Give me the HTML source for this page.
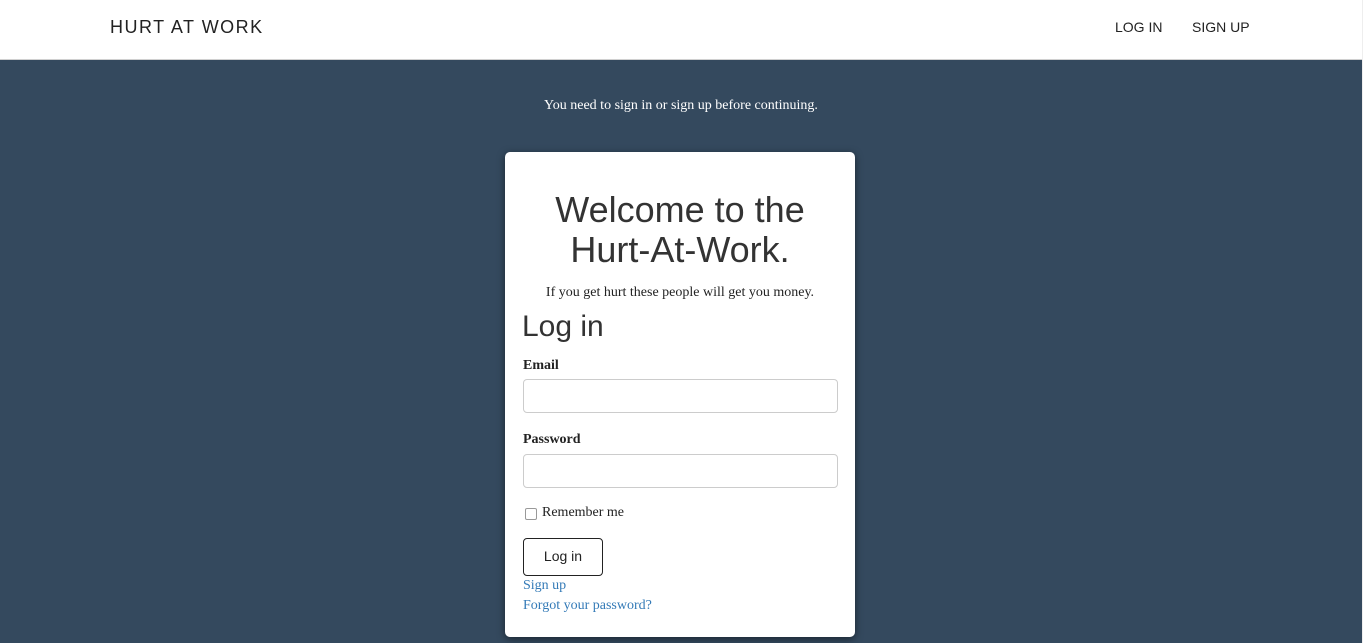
<!DOCTYPE html>
<html><head><style>
body{margin:0;width:1363px;height:643px;background:#34495e;overflow:hidden;font-family:"Liberation Serif",serif;position:relative}
.nav{position:absolute;left:0;top:0;width:1362px;height:59px;background:#fff;border-bottom:1px solid #d0d0d0}
.brand{position:absolute;left:110px;top:17px;font:18px "Liberation Sans",sans-serif;letter-spacing:1.5px;color:#222}
.nl{position:absolute;top:19px;font:14px "Liberation Sans",sans-serif;color:#222}
.strip{position:absolute;right:0;top:0;width:1px;height:643px;background:#eee}
.flash{position:absolute;top:98px;left:0;width:1362px;text-align:center;color:#fff;font-size:14px}
.card{position:absolute;left:505px;top:152px;width:350px;height:485px;background:#fff;border-radius:5px;box-shadow:0 2px 8px rgba(0,0,0,.5)}
h1{position:absolute;left:0;width:350px;top:38px;margin:0;text-align:center;font:36px/40px "Liberation Sans",sans-serif;color:#333;font-weight:300}
.sub{position:absolute;top:133px;width:350px;text-align:center;font-size:14px;color:#222}
h2{position:absolute;left:17px;top:158px;margin:0;font:30px "Liberation Sans",sans-serif;color:#333;font-weight:normal}
.lbl{position:absolute;left:18px;font-weight:bold;font-size:14px;color:#222}
.inp{position:absolute;left:18px;width:313px;height:32px;border:1px solid #ccc;border-radius:4px}
.cb{position:absolute;left:20px;top:356px;width:10px;height:10px;border:1px solid #999;border-radius:2px}
.rem{position:absolute;left:37px;top:353px;font-size:14px;color:#222}
.btn{position:absolute;left:18px;top:386px;width:78px;height:36px;border:1px solid #222;border-radius:4px;font:14px/35px "Liberation Sans",sans-serif;text-align:center;color:#222}
.lk{position:absolute;left:18px;font-size:14px;color:#337ab7}
</style></head><body>
<div class="nav"><div class="brand">HURT AT WORK</div><div class="nl" style="left:1115px">LOG IN</div><div class="nl" style="left:1192px">SIGN UP</div></div>
<div class="strip"></div>
<div class="flash">You need to sign in or sign up before continuing.</div>
<div class="card">
<h1>Welcome to the<br>Hurt-At-Work.</h1>
<div class="sub">If you get hurt these people will get you money.</div>
<h2>Log in</h2>
<div class="lbl" style="top:206px">Email</div>
<div class="inp" style="top:227px"></div>
<div class="lbl" style="top:280px">Password</div>
<div class="inp" style="top:302px"></div>
<div class="cb"></div><div class="rem">Remember me</div>
<div class="btn">Log in</div>
<div class="lk" style="top:426px">Sign up</div>
<div class="lk" style="top:446px">Forgot your password?</div>
</div>
</body></html>
